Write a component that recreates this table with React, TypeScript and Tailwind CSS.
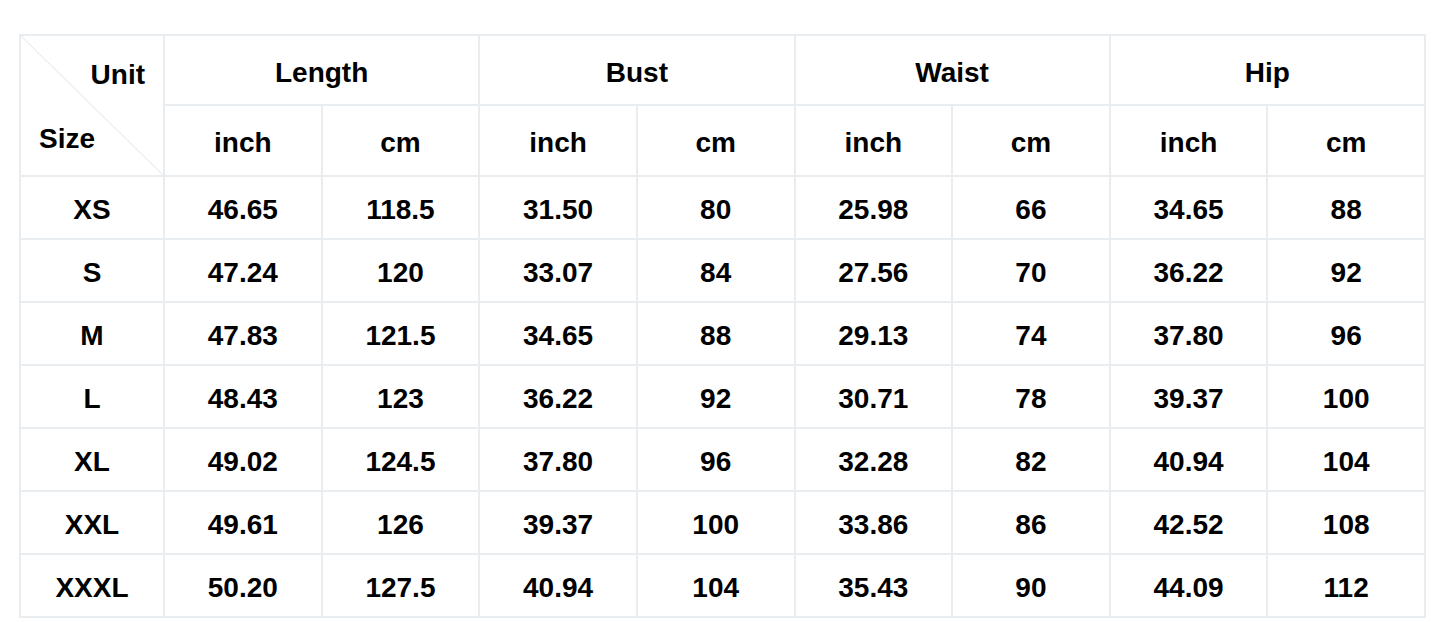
const groups = ['Length', 'Bust', 'Waist', 'Hip'];

const rows: string[][] = [
  ['XS', '46.65', '118.5', '31.50', '80', '25.98', '66', '34.65', '88'],
  ['S', '47.24', '120', '33.07', '84', '27.56', '70', '36.22', '92'],
  ['M', '47.83', '121.5', '34.65', '88', '29.13', '74', '37.80', '96'],
  ['L', '48.43', '123', '36.22', '92', '30.71', '78', '39.37', '100'],
  ['XL', '49.02', '124.5', '37.80', '96', '32.28', '82', '40.94', '104'],
  ['XXL', '49.61', '126', '39.37', '100', '33.86', '86', '42.52', '108'],
  ['XXXL', '50.20', '127.5', '40.94', '104', '35.43', '90', '44.09', '112'],
];

const cell = 'border-2 border-[#e9edf0] p-0 text-center align-middle';

export default function App() {
  return (
    <div className="min-h-[622px] w-[1445px] bg-white pt-[34px] pl-[19px] font-['Liberation_Sans',Arial,sans-serif] text-[28px] font-bold text-black">
      <table className="w-[1407px] table-fixed border-collapse">
        <colgroup>
          <col className="w-[144px]" />
          {Array.from({ length: 8 }).map((_, i) => (
            <col key={i} />
          ))}
        </colgroup>
        <thead>
          <tr className="h-[69px]">
            <th rowSpan={2} className={cell}>
              <div className="relative flex h-[139px] flex-col justify-between pt-[23px] pb-[20px] pl-[18px] pr-[18px]">
                <svg className="absolute inset-0 h-full w-full" preserveAspectRatio="none" viewBox="0 0 100 100">
                  <line x1="0" y1="0" x2="100" y2="100" stroke="#e9edf0" strokeWidth="1.2" vectorEffect="non-scaling-stroke" />
                </svg>
                <span className="relative self-end leading-8">Unit</span>
                <span className="relative self-start leading-8">Size</span>
              </div>
            </th>
            {groups.map((g) => (
              <th key={g} colSpan={2} className={cell}>
                <div className="pt-[7px] leading-8">{g}</div>
              </th>
            ))}
          </tr>
          <tr className="h-[70px]">
            {groups.map((g) => (
              <>
                <th key={g + 'i'} className={cell}>
                  <div className="pt-[6px] leading-8">inch</div>
                </th>
                <th key={g + 'c'} className={cell}>
                  <div className="pt-[6px] leading-8">cm</div>
                </th>
              </>
            ))}
          </tr>
        </thead>
        <tbody>
          {rows.map((r) => (
            <tr key={r[0]} className="h-[63px]">
              {r.map((v, i) => (
                <td key={i} className={cell}>
                  <div className="pt-[4px] leading-8">{v}</div>
                </td>
              ))}
            </tr>
          ))}
        </tbody>
      </table>
    </div>
  );
}
